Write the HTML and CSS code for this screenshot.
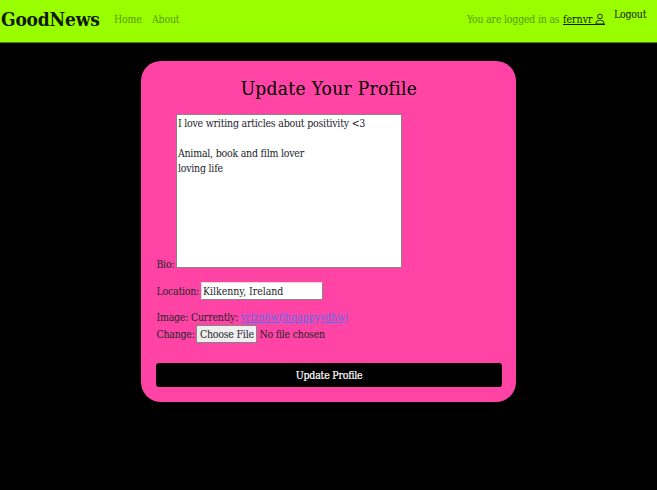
FILE: index.html
```html
<!DOCTYPE html>
<html lang="en">
<head>
<meta charset="utf-8">
<title>GoodNews</title>
<link rel="stylesheet" href="styles.css">
</head>
<body>
<nav class="navbar">
  <a class="brand">GoodNews</a>
  <a class="nav-link home">Home</a>
  <a class="nav-link about">About</a>
  <div class="account">
    <span class="status">You are logged in as</span>
    <a class="user"><span>fernvr</span><svg class="person" viewBox="0 0 16 16"><path d="M8 8a3.5 3.5 0 1 0 0-7 3.5 3.5 0 0 0 0 7Zm2.5-3.500a2.500 2.500 0 1 1-5 0 2.500 2.500 0 0 1 5 0ZM14 14c0 1-1 1-1 1H3s-1 0-1-1 1-5 6-5 6 4 6 5Zm-1-.004c-.001-.246-.154-1.300-.832-2.100C11.516 11 10.289 10 8 10c-2.290 0-3.516 1-4.168 1.900-.678.800-.83 1.850-.832 2.100h10Z"/></svg></a>
    <a class="logout">Logout</a>
  </div>
</nav>
<main class="card">
  <h1>Update Your Profile</h1>
  <form>
    <div class="row bio"><label>Bio:</label><textarea spellcheck="false">I love writing articles about positivity &lt;3

Animal, book and film lover
loving life</textarea></div>
    <div class="row location"><label>Location:</label><input type="text" value="Kilkenny, Ireland" spellcheck="false"></div>
    <div class="row current"><span>Image: Currently:</span><a class="file-link">yrfzn6wfjhqappyydhwj</a></div>
    <div class="row change"><label>Change:</label><button type="button" class="choose">Choose File</button><span class="none">No file chosen</span></div>
    <button type="button" class="submit">Update Profile</button>
  </form>
</main>
</body>
</html>
```

FILE: styles.css
```css
* { box-sizing: border-box; }
body {
  margin: 0;
  height: 490px;
  overflow: hidden;
  background: #000;
  color: #212529;
  font: 10.5px/15px "DejaVu Serif Condensed", "DejaVu Serif", serif;
  font-stretch: condensed;
  letter-spacing: -0.22px;
  white-space: nowrap;
}
.navbar {
  display: flex;
  align-items: center;
  height: 43px;
  padding: 0 11px 4px 1px;
  background: #99ff00;
  border-bottom: 1px solid #4c8000;
}
.brand { width: 99px; margin-right: 14px; font-size: 19px; line-height: 24px; font-weight: bold; letter-spacing: -0.2px; color: #0f1a00; }
.nav-link { color: #5c9900; }
.home { width: 28px; margin-right: 10px; }
.account { display: flex; align-items: center; margin-left: auto; }
.status { width: 93px; margin-right: 3px; color: #5c9900; }
.user { display: flex; width: 42px; height: 12px; color: #0f1a00; border-bottom: 1px solid #0f1a00; line-height: 12px; }
.user span { width: 31px; letter-spacing: 0; }
.person { width: 12px; height: 12px; margin: 0 -1px 0 0; fill: #0f1a00; flex: none; }
.logout { width: 32px; margin: -10px 0 0 9px; color: #0f1a00; }
.card {
  width: 375px;
  height: 341px;
  margin: 18px 0 0 141.4px;
  padding: 15px;
  border-radius: 20px;
  background: #ff44a5;
}
h1 { margin: 0; height: 38px; font-size: 19px; line-height: 25px; font-weight: normal; letter-spacing: 0.3px; color: #000; text-align: center; }
form { display: block; }
.row { display: flex; }
.bio { align-items: flex-end; height: 154px; }
.bio label { width: 19.5px; margin-bottom: -4px; }
textarea {
  width: 226px; height: 154px; padding: 1px; border: 1px solid #858585; border-radius: 0;
  font: inherit; letter-spacing: inherit; color: #212529; resize: none; overflow: hidden; background: #fff;
}
.location { align-items: center; height: 18px; margin-top: 14px; }
.location label { width: 44.7px; }
input { width: 122px; height: 18px; padding: 1px; border: 1px solid #858585; border-top-color: #ddd; border-left-color: #ddd; font: inherit; letter-spacing: -0.05px; color: #212529; background: #fff; }
.current { height: 15px; margin-top: 10px; }
.current span { width: 84px; }
.file-link { letter-spacing: -0.05px; color: #5470f0; text-decoration: underline; }
.change { align-items: center; height: 18px; }
.change label { width: 40px; }
.choose { width: 61px; height: 18px; padding: 0; border: 1px solid #858585; background: #efefef; font: inherit; letter-spacing: inherit; color: #212529; }
.none { margin-left: 2px; }
.submit { display: block; width: 345.5px; height: 24px; margin-top: 20px; padding: 0; border: 0; border-radius: 3px; background: #000; color: #fff; font: inherit; letter-spacing: inherit; -webkit-text-stroke: 0.2px #fff; }
```
